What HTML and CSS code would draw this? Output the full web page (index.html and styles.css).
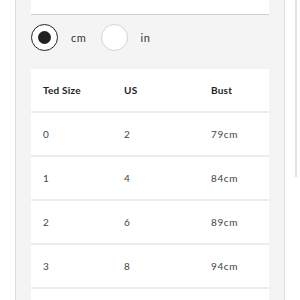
FILE: index.html
```html
<!DOCTYPE html>
<html>
<head>
  <link rel="stylesheet" href="styles.css">
</head>
<body>
  <div class="panel">
    <div class="select-box"></div>
    <div class="units">
      <span class="radio checked"></span>
      <span class="unit-label">cm</span>
      <span class="radio"></span>
      <span class="unit-label">in</span>
    </div>
    <div class="size-table">
      <div class="row head">
        <div>Ted Size</div>
        <div>US</div>
        <div>Bust</div>
      </div>
      <div class="row">
        <div>0</div>
        <div>2</div>
        <div>79cm</div>
      </div>
      <div class="row">
        <div>1</div>
        <div>4</div>
        <div>84cm</div>
      </div>
      <div class="row">
        <div>2</div>
        <div>6</div>
        <div>89cm</div>
      </div>
      <div class="row">
        <div>3</div>
        <div>8</div>
        <div>94cm</div>
      </div>
      <div class="row"></div>
    </div>
  </div>
  <div class="scroll-thumb"></div>
</body>
</html>
```

FILE: styles.css
```css
* {
  margin: 0;
  padding: 0;
  box-sizing: border-box;
}

body {
  background: #fff;
  font-family: Lato, "Noto Sans", sans-serif;
  color: #333;
  height: 300px;
  overflow: hidden;
}

.panel {
  margin-left: 15px;
  width: 270px;
  background: #f4f4f4;
  border-left: 1px solid #ddd;
  border-right: 1px solid #ddd;
  padding: 0 15px;
  height: 300px;
}

.select-box {
  height: 15px;
  background: #fff;
  border-bottom: 1px solid #cfcfcf;
}

.units {
  display: flex;
  align-items: center;
  margin-top: 9px;
  height: 27px;
}

.radio {
  width: 27px;
  height: 27px;
  border-radius: 50%;
  background: #fff;
  border: 1px solid #d4d4d4;
  display: flex;
  align-items: center;
  justify-content: center;
}

.radio.checked {
  border-color: #222;
}

.radio.checked::after {
  content: "";
  width: 13px;
  height: 13px;
  border-radius: 50%;
  background: #222;
}

.unit-label {
  font-size: 11px;
  letter-spacing: 0.6px;
  color: #333;
  margin: 0 14px 0 13px;
}

.size-table {
  margin-top: 18px;
  background: #fff;
}

.row {
  display: grid;
  grid-template-columns: 81px 87px 1fr;
  align-items: center;
  height: 44px;
  padding-left: 12px;
  border-bottom: 2px solid #ececec;
  font-size: 10px;
  letter-spacing: 0.6px;
  color: #444;
}

.row.head {
  font-weight: bold;
  color: #222;
  letter-spacing: 0.2px;
}

.scroll-thumb {
  position: fixed;
  top: 0;
  left: 295px;
  width: 2px;
  height: 177px;
  background: #e2e2e2;
}
```
